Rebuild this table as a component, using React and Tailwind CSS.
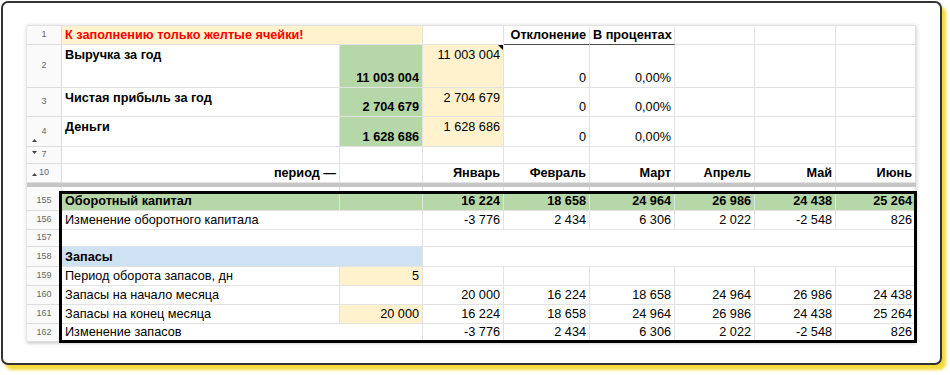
import clsx from "clsx";

const GRID = "grid grid-cols-[35px_278px_83px_81px_86px_85px_80px_81px_80px]";

function Hdr({ children, tri }) {
  return (
    <div className="relative flex items-center justify-center border-r border-b border-[#dcdcdc] bg-[#fafafa] text-[9px] text-[#666]">
      {children}
      {tri === "up" && (
        <svg className="absolute left-[5px] bottom-[4px]" width="5" height="3" viewBox="0 0 5 3">
          <path d="M0 3 L2.5 0 L5 3 Z" fill="#444" />
        </svg>
      )}
      {tri === "upc" && (
        <svg className="absolute left-[5px] top-[9px]" width="5" height="3" viewBox="0 0 5 3">
          <path d="M0 3 L2.5 0 L5 3 Z" fill="#444" />
        </svg>
      )}
      {tri === "down" && (
        <svg className="absolute left-[5px] top-[4px]" width="5" height="3" viewBox="0 0 5 3">
          <path d="M0 0 L5 0 L2.5 3 Z" fill="#444" />
        </svg>
      )}
    </div>
  );
}

function Cell({ children, bg, left, top, bold, red, span, line, note }) {
  return (
    <div
      className={clsx(
        "relative flex px-[3px] border-r border-b border-[#e2e2e2] text-[12.7px] leading-[15px] whitespace-nowrap overflow-visible",
        left ? "justify-start" : "justify-end",
        top ? "items-start pt-[3px]" : "items-end pb-[1px]",
        bold && "font-bold",
        red ? "text-[#ff0000]" : "text-black",
        bg === "g" && "bg-[#b6d7a8]",
        bg === "y" && "bg-[#fff2cc]",
        bg === "b" && "bg-[#cfe2f3]",
        span === 2 && "col-span-2",
        span === 6 && "col-span-6",
        line && "border-b-[#4a4a4a]"
      )}
    >
      {children}
      {note && (
        <svg className="absolute right-0 top-0" width="5" height="5" viewBox="0 0 5 5">
          <path d="M0 0 L5 0 L5 5 Z" fill="#000" />
        </svg>
      )}
    </div>
  );
}

function Row({ h, num, tri, children }) {
  return (
    <div className={clsx(GRID, h)}>
      <Hdr tri={tri}>{num}</Hdr>
      {children}
    </div>
  );
}

const months = ["Январь", "Февраль", "Март", "Апрель", "Май", "Июнь"];
const wc = ["16 224", "18 658", "24 964", "26 986", "24 438", "25 264"];
const dwc = ["-3 776", "2 434", "6 306", "2 022", "-2 548", "826"];
const start = ["20 000", "16 224", "18 658", "24 964", "26 986", "24 438"];

const top3 = [
  { n: 2, h: "h-[43px]", label: "Выручка за год", v: "11 003 004", note: true },
  { n: 3, h: "h-[29px]", label: "Чистая прибыль за год", v: "2 704 679" },
  { n: 4, h: "h-[30px]", label: "Деньги", v: "1 628 686", tri: "up" },
];

export default function App() {
  return (
    <div className="w-[950px] h-[375px] bg-white pl-px pt-px font-['Liberation_Sans',Arial,sans-serif]">
      <div className="w-[941px] h-[364px] rounded-[7px] border-2 border-[#333] bg-white shadow-[4px_5px_3px_#f3da3a] pl-[24px] pt-[22px]">
        <div className="relative w-[889px] bg-white border-t border-[#e2e2e2] shadow-[0_1px_4px_rgba(0,0,0,0.25)]">
          <Row h="h-[19px]" num="1">
            <Cell span={2} bg="y" left bold red>К заполнению только желтые ячейки!</Cell>
            <Cell />
            <Cell bold line>Отклонение</Cell>
            <Cell bold left line>В процентах</Cell>
            <Cell />
            <Cell />
            <Cell />
          </Row>
          {top3.map((r) => (
            <Row key={r.n} h={r.h} num={r.n} tri={r.tri}>
              <Cell left top bold>{r.label}</Cell>
              <Cell bg="g" bold>{r.v}</Cell>
              <Cell bg="y" top note={r.note}>{r.v}</Cell>
              <Cell>0</Cell>
              <Cell>0,00%</Cell>
              <Cell />
              <Cell />
              <Cell />
            </Row>
          ))}
          <Row h="h-[17px]" num="7" tri="down">
            <Cell /><Cell /><Cell /><Cell /><Cell /><Cell /><Cell /><Cell />
          </Row>
          <Row h="h-[19px]" num="10" tri="upc">
            <Cell bold>период —</Cell>
            <Cell />
            {months.map((m) => (
              <Cell key={m} bold>{m}</Cell>
            ))}
          </Row>
          <div className="h-[4px] bg-[#c6c6c6]" />
          <div className={clsx(GRID, "h-[5px]")}>
            {Array.from({ length: 9 }).map((_, i) => (
              <div key={i} className={clsx("border-r border-[#e2e2e2]", i === 0 && "bg-[#fafafa] border-[#dcdcdc]")} />
            ))}
          </div>
          <Row h="h-[19px]" num="155">
            <Cell bg="g" left bold>Оборотный капитал</Cell>
            <Cell bg="g" />
            {wc.map((v, i) => (
              <Cell key={i} bg="g" bold>{v}</Cell>
            ))}
          </Row>
          <Row h="h-[19px]" num="156">
            <Cell span={2} left>Изменение оборотного капитала</Cell>
            {dwc.map((v, i) => (
              <Cell key={i}>{v}</Cell>
            ))}
          </Row>
          <Row h="h-[17px]" num="157">
            <Cell span={2} />
            <Cell span={6} />
          </Row>
          <Row h="h-[20px]" num="158">
            <Cell span={2} bg="b" left bold>Запасы</Cell>
            <Cell span={6} />
          </Row>
          <Row h="h-[19px]" num="159">
            <Cell left>Период оборота запасов, дн</Cell>
            <Cell bg="y">5</Cell>
            <Cell /><Cell /><Cell /><Cell /><Cell /><Cell />
          </Row>
          <Row h="h-[19px]" num="160">
            <Cell left>Запасы на начало месяца</Cell>
            <Cell />
            {start.map((v, i) => (
              <Cell key={i}>{v}</Cell>
            ))}
          </Row>
          <Row h="h-[19px]" num="161">
            <Cell left>Запасы на конец месяца</Cell>
            <Cell bg="y">20 000</Cell>
            {wc.map((v, i) => (
              <Cell key={i}>{v}</Cell>
            ))}
          </Row>
          <Row h="h-[18px]" num="162">
            <Cell span={2} left>Изменение запасов</Cell>
            {dwc.map((v, i) => (
              <Cell key={i}>{v}</Cell>
            ))}
          </Row>
          {/* selection outline */}
          <div className="pointer-events-none absolute left-[32px] top-[165px] w-[858px] h-[152px] border-[3px] border-black" />
        </div>
      </div>
    </div>
  );
}
